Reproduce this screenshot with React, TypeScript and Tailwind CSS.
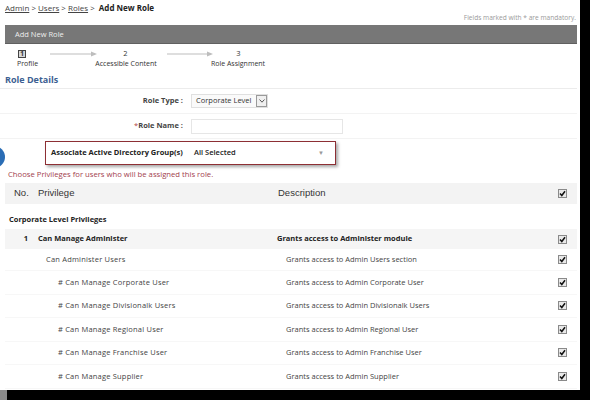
import React from 'react';

interface PrivRow {
  name: string;
  desc: string;
  level: 1 | 2;
}

const subRows: PrivRow[] = [
  { name: 'Can Administer Users', desc: 'Grants access to Admin Users section', level: 1 },
  { name: '# Can Manage Corporate User', desc: 'Grants access to Admin Corporate User', level: 2 },
  { name: '# Can Manage Divisionalk Users', desc: 'Grants access to Admin Divisionalk Users', level: 2 },
  { name: '# Can Manage Regional User', desc: 'Grants access to Admin Regional User', level: 2 },
  { name: '# Can Manage Franchise User', desc: 'Grants access to Admin Franchise User', level: 2 },
  { name: '# Can Manage Supplier', desc: 'Grants access to Admin Supplier', level: 2 },
];

const CheckBox: React.FC = () => (
  <span className="flex h-[9px] w-[9px] items-center justify-center border border-[#8a8a8a] bg-[#e9e9e9]">
    <svg width="7" height="7" viewBox="0 0 7 7">
      <path d="M1 3.6 L2.8 5.5 L6 1.2" fill="none" stroke="#111" strokeWidth="1.5" />
    </svg>
  </span>
);

const Arrow: React.FC<{ width: number }> = ({ width }) => (
  <svg width={width} height="6" viewBox={`0 0 ${width} 6`}>
    <line x1="0" y1="3" x2={width - 4} y2="3" stroke="#bdbdbd" strokeWidth="1.2" />
    <path d={`M${width - 6} 0.5 L${width} 3 L${width - 6} 5.5 Z`} fill="#bdbdbd" />
  </svg>
);

const App: React.FC = () => {
  return (
    <div className="h-[400px] w-[590px] bg-black font-['Open_Sans',sans-serif] text-[#333]">
      <div className="relative h-[390px] w-[580px] overflow-hidden bg-white">
        {/* breadcrumb */}
        <div className="h-[13px] pl-[5px] pt-[2px] text-[8px] leading-[11px] text-[#444]">
          <span className="underline">Admin</span> &gt; <span className="underline">Users</span> &gt;{' '}
          <span className="underline">Roles</span> &gt; <span className="ml-[2px] font-bold text-[#222]">Add New Role</span>
        </div>
        <div className="h-[12px] pr-[4px] text-right text-[6.6px] leading-[10px] text-[#9a9a9a]">
          Fields marked with * are mandatory.
        </div>

        <div className="ml-[5px] mr-[3px] h-[19px] border-b border-[#606060] bg-[#777] pl-[10px] text-[7.5px] leading-[19px] text-[#eee]">
          Add New Role
        </div>

        {/* steps */}
        <div className="h-[26px] pt-[5px] text-[7px] text-[#333]">
          <div className="flex h-[10px] items-center">
            <div className="ml-[18px] flex h-[8px] w-[8px] items-center justify-center border border-[#444] bg-[#d8d8d8] text-[6.5px] font-bold leading-none">
              1
            </div>
            <div className="ml-[24px] flex items-center">
              <Arrow width={47} />
            </div>
            <div className="w-[57px] text-center text-[7.5px] leading-none">2</div>
            <div className="ml-[13px] flex items-center">
              <Arrow width={46} />
            </div>
            <div className="w-[51px] text-center text-[7.5px] leading-none">3</div>
          </div>
          <div className="flex h-[10px] leading-[10px]">
            <div className="w-[95px] pl-[17px]">Profile</div>
            <div className="w-[62px] text-center">Accessible Content</div>
            <div className="ml-[50px] w-[62px] text-center">Role Assignment</div>
          </div>
        </div>

        <div className="mr-[3px] h-[19px] border-b border-[#ececec] pl-[5px] text-[9px] font-bold leading-[19px] text-[#3d5f92]">
          Role Details
        </div>

        {/* form */}
        <div className="mr-[3px] flex h-[25px] items-center border-b border-[#f3f3f3] text-[7.5px]">
          <div className="w-[183px] text-right font-bold text-[#444]">Role Type :</div>
          <div className="ml-[8px] flex h-[14px] w-[77px] items-center border border-[#e0e0e0] bg-[#fafafa] pl-[4px]">
            <span className="flex-1 text-[#333]">Corporate Level</span>
            <span className="flex h-[12px] w-[11px] items-center justify-center border border-[#9a9a9a] bg-[#f0f0f0]">
              <svg width="6" height="4" viewBox="0 0 6 4">
                <path d="M0.5 0.5 L3 3.2 L5.5 0.5" fill="none" stroke="#555" strokeWidth="1" />
              </svg>
            </span>
          </div>
        </div>
        <div className="mr-[3px] flex h-[25px] items-center border-b border-[#f3f3f3] text-[7.5px]">
          <div className="w-[183px] text-right font-bold text-[#444]">
            <span className="font-normal text-[#b04040]">*</span>Role Name :
          </div>
          <div className="ml-[8px] h-[15px] w-[152px] border border-[#e6e6e6] bg-white" />
        </div>

        <div className="ml-[45px] mt-[2px] flex h-[24px] w-[291px] items-center border-[1.5px] border-[#8d2f34] bg-white pl-[5px] text-[7.5px] shadow-[2px_2px_3px_rgba(0,0,0,0.35)]">
          <span className="w-[143px] font-bold text-[#222]">Associate Active Directory Group(s)</span>
          <span className="flex-1 font-semibold text-[#222]">All Selected</span>
          <span className="mr-[11px] text-[6px] text-[#999]">▼</span>
        </div>
        <div className="absolute left-[-17px] top-[146px] h-[22px] w-[22px] rounded-full bg-[#2a6db5]" />

        <div className="h-[18px] pl-[8px] text-[7.7px] leading-[18px] text-[#a2414d]">
          Choose Privileges for users who will be assigned this role.
        </div>

        {/* privileges table */}
        <div className="ml-[5px] mr-[3px]">
          <div className="flex h-[21px] items-center bg-[#f3f3f3] font-['Liberation_Sans',Arial,sans-serif] text-[9.5px] text-[#333]">
            <div className="w-[33px] pl-[9px]">No.</div>
            <div className="w-[240px]">Privilege</div>
            <div className="flex-1">Description</div>
            <div className="pr-[10px]">
              <CheckBox />
            </div>
          </div>
          <div className="h-[25px] pl-[4px] pt-[5px] text-[7.5px] font-bold leading-[20px] text-[#222]">
            Corporate Level Privileges
          </div>
          <div className="flex h-[20px] items-center bg-[#f5f5f5] text-[7.5px] font-bold text-[#222]">
            <div className="w-[33px] pr-[10px] text-right">1</div>
            <div className="w-[239px]">Can Manage Administer</div>
            <div className="flex-1">Grants access to Administer module</div>
            <div className="pr-[10px]">
              <CheckBox />
            </div>
          </div>
          {subRows.map((row, i) => (
            <div
              key={row.name}
              className={`flex items-center border-b border-[#f7f7f7] text-[7.5px] text-[#444] ${i === 0 ? 'h-[22px]' : 'h-[23.5px]'}`}
            >
              <div className="w-[272px]">
                <div className={`tracking-[0.2px] ${row.level === 1 ? 'pl-[41px]' : 'pl-[53px]'}`}>{row.name}</div>
              </div>
              <div className="flex-1 pl-[9px]">{row.desc}</div>
              <div className="pr-[10px]">
                <CheckBox />
              </div>
            </div>
          ))}
        </div>
      </div>
      <div className="h-[10px] w-[7px] bg-[#8a8a8a]" />
    </div>
  );
};

export default App;
